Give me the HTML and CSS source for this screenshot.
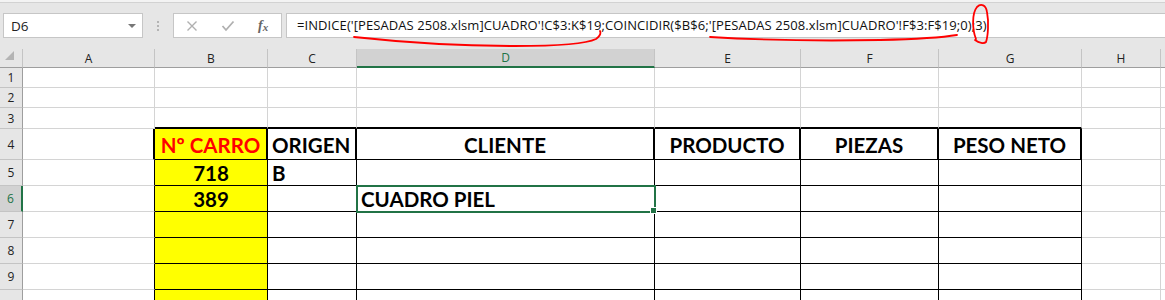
FILE: index.html
```html
<!DOCTYPE html>
<html lang="es">
<head>
    <meta charset="UTF-8">
    <title>PESADAS 2508 - Excel</title>
    <link rel="stylesheet" href="styles.css">
</head>
<body>
    <div class="ribbon-edge"></div>
    <div class="formula-bar">
        <div class="name-box">
            <span>D6</span>
            <span class="caret"></span>
        </div>
        <svg class="grip" width="2" height="10" viewBox="0 0 2 10">
            <rect x="0" y="0" width="2" height="2" fill="#b4b4b4"/>
            <rect x="0" y="4" width="2" height="2" fill="#b4b4b4"/>
            <rect x="0" y="8" width="2" height="2" fill="#b4b4b4"/>
        </svg>
        <div class="fx-buttons">
            <span class="fx-slot">
                <svg width="12" height="12" viewBox="0 0 12 12"><path d="M1.5 1.5 L10.5 10.5 M10.5 1.5 L1.5 10.5" stroke="#b0b0b0" stroke-width="1.4" fill="none"/></svg>
            </span>
            <span class="fx-slot">
                <svg width="14" height="12" viewBox="0 0 14 12"><path d="M1.5 6 L5 10 L12.5 1.5" stroke="#b0b0b0" stroke-width="1.8" fill="none"/></svg>
            </span>
            <span class="fx-slot fx-label"><i>f</i><i class="x">x</i></span>
        </div>
        <div class="formula-input">=INDICE('[PESADAS 2508.xlsm]CUADRO'!C$3:K$19;COINCIDIR($B$6;'[PESADAS 2508.xlsm]CUADRO'!F$3:F$19;0);3)</div>
    </div>

    <!-- marcas a mano sobre la barra de fórmulas -->
    <svg class="ink" width="1165" height="60" viewBox="0 0 1165 60">
        <path d="M354 37 C 400 42, 450 46, 515 46 C 565 46, 588 43, 596 39 C 600 36, 601 33, 600 31" />
        <path d="M710 37 C 760 40, 830 41, 880 40 C 920 39, 945 37, 957 35" />
        <path d="M976 39 C 972 29, 972 13, 977 7 C 981 3, 986 5, 987 12 C 989 22, 988 36, 986 42 C 984 44, 979 43, 975 40" />
    </svg>

    <table class="grid">
        <colgroup>
            <col class="w-hd"><col class="w-a"><col class="w-b"><col class="w-c"><col class="w-d">
            <col class="w-e"><col class="w-f"><col class="w-g"><col class="w-h"><col class="w-i">
        </colgroup>
        <tr class="col-heads">
            <th class="corner"><span class="corner-tri"></span></th>
            <th>A</th><th>B</th><th>C</th><th class="sel">D</th><th>E</th><th>F</th><th>G</th><th>H</th><th></th>
        </tr>
        <tr class="r-sm">
            <th class="row-head">1</th>
            <td></td><td></td><td></td><td></td><td></td><td></td><td></td><td></td><td></td>
        </tr>
        <tr class="r-sm">
            <th class="row-head">2</th>
            <td></td><td></td><td></td><td></td><td></td><td></td><td></td><td></td><td></td>
        </tr>
        <tr class="r-3">
            <th class="row-head">3</th>
            <td></td><td class="top"></td><td class="top"></td><td class="top"></td><td class="top"></td><td class="top"></td><td class="top"></td><td></td><td></td>
        </tr>
        <tr class="r-lg">
            <th class="row-head">4</th>
            <td class="edge-thick"></td>
            <td class="box thick yellow center red">Nº CARRO</td>
            <td class="box thick">ORIGEN</td>
            <td class="box thick center">CLIENTE</td>
            <td class="box thick center">PRODUCTO</td>
            <td class="box thick center">PIEZAS</td>
            <td class="box thick center">PESO NETO</td>
            <td></td><td></td>
        </tr>
        <tr class="r-md">
            <th class="row-head">5</th>
            <td class="edge"></td>
            <td class="box yellow center">718</td>
            <td class="box">B</td>
            <td class="box"></td><td class="box"></td><td class="box"></td><td class="box"></td>
            <td></td><td></td>
        </tr>
        <tr class="r-md">
            <th class="row-head active">6</th>
            <td class="edge"></td>
            <td class="box yellow center">389</td>
            <td class="box"></td>
            <td class="box current">CUADRO PIEL<span class="fill-handle"></span></td>
            <td class="box"></td><td class="box"></td><td class="box"></td>
            <td></td><td></td>
        </tr>
        <tr class="r-md">
            <th class="row-head">7</th>
            <td class="edge"></td>
            <td class="box yellow"></td><td class="box"></td><td class="box"></td><td class="box"></td><td class="box"></td><td class="box"></td>
            <td></td><td></td>
        </tr>
        <tr class="r-md">
            <th class="row-head">8</th>
            <td class="edge"></td>
            <td class="box yellow"></td><td class="box"></td><td class="box"></td><td class="box"></td><td class="box"></td><td class="box"></td>
            <td></td><td></td>
        </tr>
        <tr class="r-md">
            <th class="row-head">9</th>
            <td class="edge"></td>
            <td class="box yellow"></td><td class="box"></td><td class="box"></td><td class="box"></td><td class="box"></td><td class="box"></td>
            <td></td><td></td>
        </tr>
        <tr class="r-md">
            <th class="row-head"></th>
            <td class="edge"></td>
            <td class="box yellow"></td><td class="box"></td><td class="box"></td><td class="box"></td><td class="box"></td><td class="box"></td>
            <td></td><td></td>
        </tr>
    </table>
</body>
</html>
```

FILE: styles.css
```css
/* Hoja de cálculo */
body {
    margin: 0;
    background: #fff;
    overflow: hidden;
    font-family: "Open Sans", "Liberation Sans", sans-serif;
    position: relative;
}

.ribbon-edge {
    height: 2px;
    background: #f3f3f3;
}

/* Barra de fórmulas */
.formula-bar {
    height: 47px;
    box-sizing: border-box;
    background: #e6e6e6;
    border-top: 1px solid #d2d2d2;
    padding-top: 10px;
    display: flex;
    align-items: flex-start;
}

.name-box {
    margin-left: 3px;
    width: 140px;
    height: 25px;
    box-sizing: border-box;
    border: 1px solid #c6c6c6;
    background: #fff;
    display: flex;
    align-items: center;
    justify-content: space-between;
    padding: 0 6px 0 7px;
    font-size: 13.5px;
    color: #222;
}
.name-box .caret {
    width: 0;
    height: 0;
    border-left: 4px solid transparent;
    border-right: 4px solid transparent;
    border-top: 4px solid #777;
}

.grip {
    margin: 8px 0 0 14px;
}

.fx-buttons {
    margin-left: 14px;
    width: 109px;
    height: 25px;
    box-sizing: border-box;
    border: 1px solid #c6c6c6;
    background: #fff;
    display: flex;
}
.fx-slot {
    width: 36px;
    display: flex;
    align-items: center;
    justify-content: center;
}
.fx-label {
    font-family: "Liberation Serif", serif;
    font-size: 14px;
    color: #666;
    font-weight: bold;
}
.fx-label .x {
    font-size: 11px;
    margin-top: 3px;
}

.formula-input {
    margin-left: 4px;
    flex: 1;
    height: 25px;
    box-sizing: border-box;
    border: 1px solid #c6c6c6;
    border-right: none;
    background: #fff;
    padding-left: 10px;
    font-size: 13px;
    letter-spacing: 0.08px;
    line-height: 23px;
    color: #111;
    white-space: nowrap;
    overflow: hidden;
}

.ink {
    position: absolute;
    left: 0;
    top: 0;
    pointer-events: none;
}
.ink path {
    fill: none;
    stroke: #f00;
    stroke-width: 1.8;
    stroke-linecap: round;
}

/* Cuadrícula */
.grid {
    table-layout: fixed;
    width: 1261px;
    border-collapse: separate;
    border-spacing: 0;
}
.w-hd { width: 23px; }
.w-a { width: 132px; }
.w-b { width: 113px; }
.w-c { width: 89px; }
.w-d { width: 298px; }
.w-e { width: 146px; }
.w-f { width: 138px; }
.w-g { width: 143px; }
.w-h { width: 79px; }
.w-i { width: 100px; }

.grid th,
.grid td {
    box-sizing: border-box;
    padding: 0;
    border-right: 1px solid #d4d4d4;
    border-bottom: 1px solid #d4d4d4;
}

.col-heads th {
    height: 19px;
    background: #e6e6e6;
    border-right: 1px solid #c4c4c4;
    border-bottom: 1px solid #9e9e9e;
    font-weight: normal;
    font-size: 12px;
    color: #222;
    text-align: center;
}
.col-heads th.sel {
    background: #d2d2d2;
    color: #217346;
    border-bottom: 2px solid #217346;
}
.corner {
    vertical-align: bottom;
    text-align: right;
}
.corner-tri {
    display: inline-block;
    width: 0;
    height: 0;
    border-left: 9px solid transparent;
    border-bottom: 9px solid #b4b4b4;
    margin: 0 3px 3px 0;
}

.row-head {
    background: #e6e6e6;
    font-weight: normal;
    font-size: 12px;
    color: #222;
    text-align: center;
    border-right-color: #9e9e9e !important;
    border-bottom-color: #c4c4c4 !important;
}
.row-head.active {
    background: #d2d2d2;
    color: #217346;
    border-right: 2px solid #217346 !important;
}

.r-sm, .r-sm > * { height: 20px; }
.r-3, .r-3 > * { height: 21px; }
.r-lg, .r-lg > * { height: 31px; }
.r-md, .r-md > * { height: 26px; }

/* Tabla de datos */
.grid td.top {
    border-bottom: 2px solid #000;
}
.grid td.edge {
    border-right: 1px solid #000;
}
.grid td.edge-thick {
    border-right: 2px solid #000;
}
.grid td.box {
    border-right: 1px solid #000;
    border-bottom: 1px solid #000;
    font-family: "Lato", "Open Sans", sans-serif;
    font-weight: bold;
    font-size: 20.5px;
    color: #000;
    vertical-align: bottom;
    line-height: 22px;
    padding: 0 4px 1px 4px;
    white-space: nowrap;
}
.grid td.thick {
    border-right: 2px solid #000;
    padding-bottom: 3px;
}
.center { text-align: center; }
.red { color: #f00 !important; }
.yellow { background: #ff0; }

.grid td.current {
    position: relative;
    outline: 2px solid #217346;
    outline-offset: -1px;
}
.fill-handle {
    position: absolute;
    right: -3px;
    bottom: -3px;
    width: 5px;
    height: 5px;
    background: #217346;
    border: 1px solid #fff;
}
```
